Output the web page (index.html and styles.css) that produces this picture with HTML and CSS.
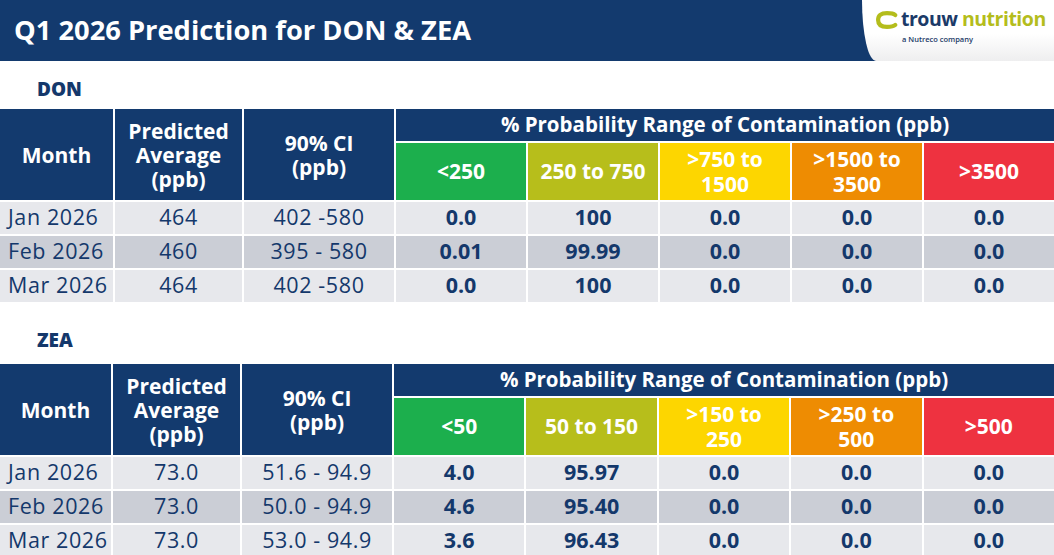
FILE: index.html
```html
<!DOCTYPE html>
<html lang="en">
<head>
<meta charset="utf-8">
<title>Q1 2026 Prediction for DON &amp; ZEA</title>
<link rel="stylesheet" href="styles.css">
</head>
<body>
<header class="topbar">
  <h1 class="title">Q1 2026 Prediction for DON &amp; ZEA</h1>
  <div class="brand">
    <div class="brand-row">
      <svg class="brand-icon" width="22" height="18" viewBox="0 0 22 18" aria-hidden="true">
        <path d="M19.2 4 C17.6 2.6 15 2.1 11 2.1 C4.8 2.1 2.1 4.5 2.1 9 C2.1 13.5 4.8 15.9 11 15.9 C15 15.9 17.6 15.4 19.2 14" fill="none" stroke="#b4bd1c" stroke-width="4.2" stroke-linecap="round"/>
      </svg>
      <span class="brand-name"><span class="trouw">trouw</span> <span class="nutrition">nutrition</span></span>
    </div>
    <div class="brand-tag">a Nutreco company</div>
  </div>
</header>

<main>
  <section class="block block-don">
    <h2 class="label">DON</h2>
    <div class="grid grid-don">
      <div class="hcell span2">Month</div>
      <div class="hcell span2 lines">Predicted<br>Average<br>(ppb)</div>
      <div class="hcell span2 lines">90% CI<br>(ppb)</div>
      <div class="hcell prob">% Probability Range of Contamination (ppb)</div>
      <div class="ccell c-green">&lt;250</div>
      <div class="ccell c-olive">250 to 750</div>
      <div class="ccell c-yellow">&gt;750 to<br>1500</div>
      <div class="ccell c-orange">&gt;1500 to<br>3500</div>
      <div class="ccell c-red">&gt;3500</div>

      <div class="dcell month">Jan 2026</div><div class="dcell">464</div><div class="dcell">402 -580</div>
      <div class="dcell val">0.0</div><div class="dcell val">100</div><div class="dcell val">0.0</div><div class="dcell val">0.0</div><div class="dcell val">0.0</div>

      <div class="dcell dark month">Feb 2026</div><div class="dcell dark">460</div><div class="dcell dark">395 - 580</div>
      <div class="dcell dark val">0.01</div><div class="dcell dark val">99.99</div><div class="dcell dark val">0.0</div><div class="dcell dark val">0.0</div><div class="dcell dark val">0.0</div>

      <div class="dcell month">Mar 2026</div><div class="dcell">464</div><div class="dcell">402 -580</div>
      <div class="dcell val">0.0</div><div class="dcell val">100</div><div class="dcell val">0.0</div><div class="dcell val">0.0</div><div class="dcell val">0.0</div>
    </div>
  </section>

  <section class="block block-zea">
    <h2 class="label">ZEA</h2>
    <div class="grid grid-zea">
      <div class="hcell span2">Month</div>
      <div class="hcell span2 lines">Predicted<br>Average<br>(ppb)</div>
      <div class="hcell span2 lines">90% CI<br>(ppb)</div>
      <div class="hcell prob">% Probability Range of Contamination (ppb)</div>
      <div class="ccell c-green">&lt;50</div>
      <div class="ccell c-olive">50 to 150</div>
      <div class="ccell c-yellow">&gt;150 to<br>250</div>
      <div class="ccell c-orange">&gt;250 to<br>500</div>
      <div class="ccell c-red">&gt;500</div>

      <div class="dcell month">Jan 2026</div><div class="dcell">73.0</div><div class="dcell">51.6 - 94.9</div>
      <div class="dcell val">4.0</div><div class="dcell val">95.97</div><div class="dcell val">0.0</div><div class="dcell val">0.0</div><div class="dcell val">0.0</div>

      <div class="dcell dark month">Feb 2026</div><div class="dcell dark">73.0</div><div class="dcell dark">50.0 - 94.9</div>
      <div class="dcell dark val">4.6</div><div class="dcell dark val">95.40</div><div class="dcell dark val">0.0</div><div class="dcell dark val">0.0</div><div class="dcell dark val">0.0</div>

      <div class="dcell month">Mar 2026</div><div class="dcell">73.0</div><div class="dcell">53.0 - 94.9</div>
      <div class="dcell val">3.6</div><div class="dcell val">96.43</div><div class="dcell val">0.0</div><div class="dcell val">0.0</div><div class="dcell val">0.0</div>
    </div>
  </section>
</main>
</body>
</html>
```
FILE: styles.css
```css
* { box-sizing: border-box; }

html, body {
  margin: 0;
  padding: 0;
  background: #ffffff;
  overflow: hidden;
}

body {
  width: 1054px;
  height: 555px;
  font-family: "Open Sans", "Liberation Sans", sans-serif;
  color: #14386b;
}

/* ---------- top bar ---------- */
.topbar {
  height: 61px;
  background: #133a6e;
  display: flex;
  align-items: stretch;
  justify-content: space-between;
}

.title {
  margin: 0;
  padding-left: 14px;
  display: flex;
  align-items: center;
  font-size: 27.3px;
  font-weight: 700;
  color: #ffffff;
  padding-bottom: 3px;
}

.brand {
  width: 192px;
  background: linear-gradient(to bottom, #ffffff 0%, #ffffff 55%, #eeeeef 100%);
  border-bottom-left-radius: 14px 61px;
  padding: 7px 0 0 14px;
  display: flex;
  flex-direction: column;
}

.brand-row {
  display: flex;
  align-items: center;
  gap: 3px;
  height: 24px;
}

.brand-icon { flex: none; margin-top: 2px; }

.brand-name {
  font-size: 19.5px;
  font-weight: 700;
  letter-spacing: -0.5px;
  line-height: 24px;
  white-space: nowrap;
}

.trouw { color: #1b3a68; }
.nutrition { color: #b4bd1c; }

.brand-tag {
  margin-top: 4px;
  padding-left: 26px;
  font-size: 7.5px;
  font-weight: 600;
  color: #1b3a68;
  line-height: 9px;
}

/* ---------- sections ---------- */
.label {
  margin: 0;
  padding-left: 37px;
  font-size: 19px;
  font-weight: 800;
  line-height: 24px;
  color: #14386b;
}

.block-don .label { padding-top: 16px; padding-bottom: 8px; }
.block-zea .label { padding-top: 26px; padding-bottom: 12px; }

/* ---------- grids ---------- */
.grid {
  display: grid;
  grid-template-rows: 32px 57px repeat(3, 32px);
  gap: 2px;
  width: 1054px;
}

.grid-don { grid-template-columns: 113px 127px 150px repeat(5, 1fr); }
.grid-zea { grid-template-columns: 111px 127px 150px repeat(5, 1fr); }

.hcell {
  background: #133a6e;
  color: #ffffff;
  font-weight: 700;
  font-size: 21px;
  display: flex;
  align-items: center;
  justify-content: center;
  text-align: center;
}

.span2 { grid-row: span 2; }
.lines { line-height: 24px; }

.prob {
  grid-column: 4 / span 5;
  font-size: 20.5px;
  line-height: 24px;
  padding-bottom: 2px;
}

.ccell {
  color: #ffffff;
  font-weight: 700;
  font-size: 21px;
  line-height: 25px;
  display: flex;
  align-items: center;
  justify-content: center;
  text-align: center;
}

.c-green  { background: #1caf4d; }
.c-olive  { background: #b7be1b; }
.c-yellow { background: #fdd600; }
.c-orange { background: #ee8c02; }
.c-red    { background: #ee3240; }

.dcell {
  background: #e7e8ec;
  color: #14386b;
  font-size: 21.5px;
  font-weight: 500;
  letter-spacing: 0.6px;
  display: flex;
  align-items: center;
  justify-content: center;
  line-height: 30px;
  padding-bottom: 2px;
  white-space: nowrap;
}

.dcell.dark { background: #cbced6; }

.dcell.month {
  justify-content: flex-start;
  padding-left: 8px;
}

.dcell.val {
  font-weight: 700;
  letter-spacing: 0;
}
```
